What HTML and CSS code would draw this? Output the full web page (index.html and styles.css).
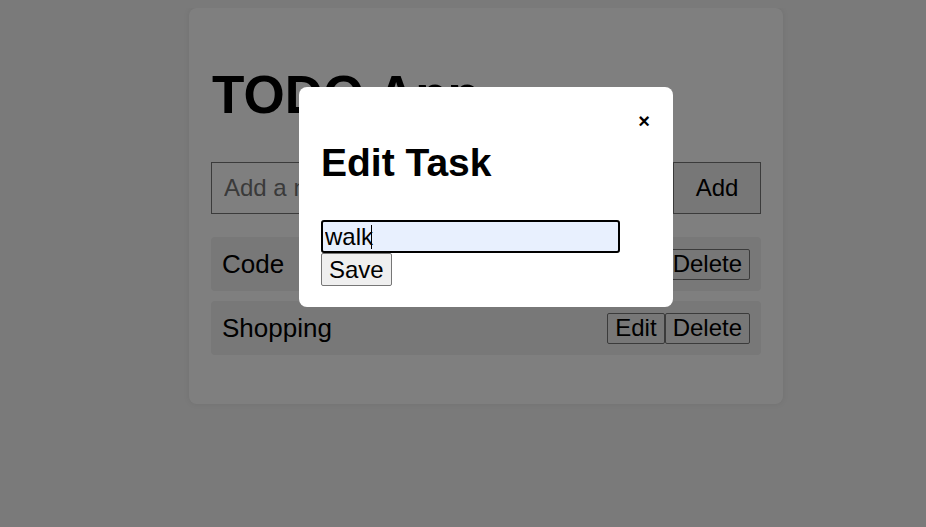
FILE: index.html
```html
<!DOCTYPE html>
<html lang="en">
<head>
<meta charset="utf-8">
<title>TODO App</title>
<link rel="stylesheet" href="styles.css">
</head>
<body>
<div class="app">
  <h1 class="title">TODO App</h1>
  <form class="add-form">
    <input class="add-input" type="text" placeholder="Add a new task">
    <button class="add-btn" type="button">Add</button>
  </form>
  <ul class="task-list">
    <li class="task">
      <span class="task-name">Code</span>
      <span class="task-actions"><button class="btn" type="button">Edit</button><button class="btn" type="button">Delete</button></span>
    </li>
    <li class="task">
      <span class="task-name">Shopping</span>
      <span class="task-actions"><button class="btn" type="button">Edit</button><button class="btn" type="button">Delete</button></span>
    </li>
  </ul>
</div>
<div class="overlay"></div>
<div class="modal">
  <button class="close" type="button">×</button>
  <h2 class="modal-title">Edit Task</h2>
  <form class="edit-form">
    <div class="edit-field"><input class="edit-input" type="text" value="walk"><span class="caret"></span></div>
    <button class="save-btn" type="button">Save</button>
  </form>
</div>
</body>
</html>
```
FILE: styles.css
```css
html, body {
  height: 100%;
}
body {
  margin: 8px 0 0 0;
  background: #f4f4f4;
  font-family: "Liberation Sans", Arial, sans-serif;
  color: #000;
}
.app {
  width: 594px;
  box-sizing: border-box;
  margin-left: 189px;
  background: #fff;
  border-radius: 8px;
  padding: 22px 22px 49px;
  box-shadow: 0 0 6px rgba(0, 0, 0, 0.08);
}
.title {
  font-size: 53px;
  font-weight: bold;
  margin: 35px 0 37px 1px;
  line-height: 60px;
}
.add-form {
  display: flex;
  margin: 0 0 23px;
}
.add-input {
  flex: 1;
  min-width: 0;
  height: 52px;
  box-sizing: border-box;
  font: 24px "Liberation Sans", Arial, sans-serif;
  padding: 0 12px;
  border: 1px solid #767676;
  border-radius: 0;
  background: #fff;
  outline: none;
}
.add-input::placeholder {
  color: #757575;
}
.add-btn {
  width: 88px;
  height: 52px;
  box-sizing: border-box;
  font: 24px "Liberation Sans", Arial, sans-serif;
  border: 1px solid #767676;
  background: #efefef;
  color: #000;
  margin-left: 0;
  padding: 0;
}
.task-list {
  list-style: none;
  margin: 0;
  padding: 0;
  display: flex;
  flex-direction: column;
  gap: 10px;
}
.task {
  display: flex;
  align-items: center;
  justify-content: space-between;
  background: #f0f0f0;
  border-radius: 4px;
  padding: 0 11px;
  height: 54px;
  font-size: 26px;
}
.task-actions {
  display: flex;
}
.btn {
  font: 24px "Liberation Sans", Arial, sans-serif;
  height: 31px;
  padding: 0 7px;
  border: 1px solid #767676;
  border-radius: 2px;
  background: #efefef;
  color: #000;
}
.overlay {
  position: fixed;
  inset: 0;
  background: rgba(0, 0, 0, 0.5);
}
.modal {
  position: fixed;
  left: 299px;
  top: 87px;
  width: 374px;
  box-sizing: border-box;
  background: #fff;
  border-radius: 8px;
  padding: 22px 22px 21px;
}
.close {
  position: absolute;
  top: 23px;
  right: 18px;
  width: 22px;
  height: 22px;
  padding: 0;
  border: none;
  background: transparent;
  font: bold 20px "Liberation Sans", Arial, sans-serif;
  line-height: 22px;
  color: #000;
}
.modal-title {
  font-size: 39px;
  font-weight: bold;
  margin: 32px 0 35px;
  line-height: 44px;
}
.edit-form {
  display: flex;
  flex-direction: column;
  align-items: flex-start;
}
.edit-field {
  position: relative;
}
.edit-input {
  display: block;
  width: 299px;
  height: 33px;
  box-sizing: border-box;
  font: 24px "Liberation Sans", Arial, sans-serif;
  padding: 0 2px;
  border: 2px solid #000;
  border-radius: 3px;
  background: #e8f0fe;
  color: #000;
  outline: none;
}
.caret {
  position: absolute;
  left: 50px;
  top: 5px;
  width: 1px;
  height: 24px;
  background: #000;
}
.save-btn {
  font: 24px "Liberation Sans", Arial, sans-serif;
  height: 33px;
  padding: 0 7px;
  border: 1px solid #767676;
  border-radius: 2px;
  background: #efefef;
  color: #000;
}
```
